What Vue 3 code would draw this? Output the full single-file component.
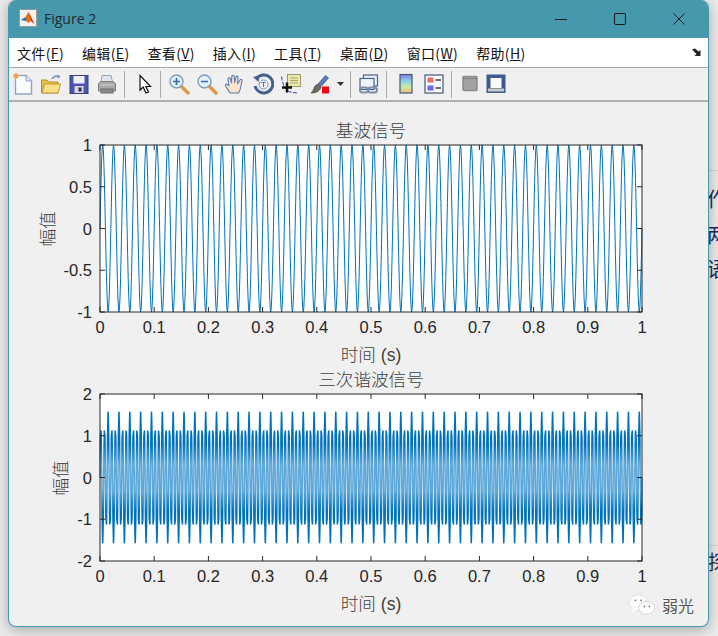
<script setup>
const W = 542
const H = 167

function line(fn, ymin, ymax, n) {
  const pts = []
  for (let i = 0; i <= n; i++) {
    const t = i / n
    const x = t * W
    const y = H - ((fn(t) - ymin) / (ymax - ymin)) * H
    pts.push(x.toFixed(2) + ',' + y.toFixed(2))
  }
  return pts.join(' ')
}
const sinePts = line(t => Math.sin(2 * Math.PI * 50 * t), -1, 1, 1000)
const harmPts = line(
  t => 1.32 * Math.sin(2 * Math.PI * 150 * t) - 0.24 * Math.sin(2 * Math.PI * 50 * t),
  -2, 2, 1000
)
const xTicks = [0, 0.1, 0.2, 0.3, 0.4, 0.5, 0.6, 0.7, 0.8, 0.9, 1].map(v => ({
  x: v * W,
  label: String(v)
}))
const yTicks1 = [1, 0.5, 0, -0.5, -1].map((v, i) => ({ y: (i * H) / 4, label: String(v) }))
const yTicks2 = [2, 1, 0, -1, -2].map((v, i) => ({ y: (i * H) / 4, label: String(v) }))

const menus = [
  ['文件', 'F'], ['编辑', 'E'], ['查看', 'V'], ['插入', 'I'],
  ['工具', 'T'], ['桌面', 'D'], ['窗口', 'W'], ['帮助', 'H']
]
</script>

<template>
  <div class="page">
    <div class="behind">
      <span class="frag f1">作</span>
      <span class="frag f2">两</span>
      <span class="frag f3">语</span>
      <span class="frag f4">探</span>
      <i class="rule r1"></i>
      <i class="rule r2"></i>
    </div>

    <div class="window">
      <header class="titlebar">
        <svg class="appicon" width="18" height="18" viewBox="0 0 18 18">
          <rect x="0.5" y="0.5" width="17" height="17" fill="#f2f2f2" stroke="#9a9a9a" />
          <path d="M2 11 L6 8.5 L9.5 3 L15.5 15 L12 12 L9 14 L6.5 11 Z" fill="#e8701a" />
          <path d="M2 11 L6 8.5 L8 10.5 L6.5 12 Z" fill="#2f6fb0" />
          <path d="M9.5 3 L12 12 L15.5 15 Z" fill="#c8401a" />
        </svg>
        <span class="wintitle">Figure 2</span>
        <div class="winbtns">
          <svg width="14" height="14" viewBox="0 0 14 14"><path d="M1 7.5H13" stroke="#1a1a1a" stroke-width="1" fill="none" /></svg>
          <svg width="14" height="14" viewBox="0 0 14 14"><rect x="1.5" y="1.5" width="11" height="11" rx="1.5" stroke="#1a1a1a" stroke-width="1.1" fill="none" /></svg>
          <svg width="14" height="14" viewBox="0 0 14 14"><path d="M1.5 1.5L12.5 12.5M12.5 1.5L1.5 12.5" stroke="#1a1a1a" stroke-width="1" fill="none" /></svg>
        </div>
      </header>

      <nav class="menubar">
        <span v-for="m in menus" :key="m[1]" class="menu">{{ m[0] }}(<u>{{ m[1] }}</u>)</span>
        <svg class="dock" width="11" height="9" viewBox="0 0 11 9">
          <path d="M0 1.5L3 0.5L6.5 3.5L8.5 2L8.5 8L2.5 8L4.5 6L0 1.5Z" fill="#222" />
        </svg>
      </nav>

      <div class="toolbar">
        <span class="btn">
          <svg width="22" height="24" viewBox="0 0 22 24">
            <path d="M3.5 3.5H14L19.5 9V22H3.5Z" fill="#fbfdff" stroke="#8ea6c6" stroke-width="1.4" />
            <path d="M14 3.5V9H19.5" fill="#dbe7f5" stroke="#8ea6c6" />
            <circle cx="4" cy="4" r="2.6" fill="#ee9a55" stroke="#f5c9a2" />
          </svg>
        </span>
        <span class="btn">
          <svg width="22" height="24" viewBox="0 0 22 24">
            <path d="M1.5 8H7L9 10H18V21H1.5Z" fill="#e8bd4e" stroke="#b58d2a" />
            <path d="M2 21L4.5 12H20.5L18 21Z" fill="#fae08a" stroke="#c29a35" />
            <path d="M12 7C13 4.5 16 3.5 19 4.5" fill="none" stroke="#6f8fb5" stroke-width="1.5" />
            <path d="M18 2.5L20.5 5L17.5 6.5Z" fill="#6f8fb5" />
          </svg>
        </span>
        <span class="btn">
          <svg width="20" height="24" viewBox="0 0 20 24">
            <rect x="1" y="3.5" width="18" height="18" fill="#4a55b5" stroke="#39417f" />
            <rect x="4.5" y="4" width="11" height="7.5" fill="#eef0fa" />
            <rect x="5.5" y="14" width="9" height="7" fill="#d9d9d9" />
            <rect x="9.5" y="15.5" width="3" height="4" fill="#2c2c50" />
          </svg>
        </span>
        <span class="btn">
          <svg width="20" height="24" viewBox="0 0 20 24">
            <path d="M5 3.5H14L15.5 10H4Z" fill="#dfe6ee" stroke="#9aa5b0" />
            <path d="M1.5 11.5L4 9.5H16L18.5 11.5V19H1.5Z" fill="#a9a9a9" stroke="#7d7d7d" />
            <rect x="4" y="17" width="12" height="4" fill="#8a8a8a" stroke="#6e6e6e" />
            <path d="M3 13H17" stroke="#d0d0d0" />
          </svg>
        </span>
        <i class="sep s1"></i>
        <span class="btn">
          <svg width="14" height="24" viewBox="0 0 14 24">
            <path d="M2 3.5V18L5.2 15L8 21L10.5 20L7.8 14.5H12.5Z" fill="#fff" stroke="#111" stroke-width="1.2" />
          </svg>
        </span>
        <i class="sep s2"></i>
        <span class="btn">
          <svg width="22" height="24" viewBox="0 0 22 24">
            <path d="M13 14L20 21" stroke="#d99a45" stroke-width="3.4" stroke-linecap="round" />
            <circle cx="8.5" cy="9.5" r="6.5" fill="#dff0fb" stroke="#7f9dbb" stroke-width="1.4" />
            <path d="M5 9.5H12M8.5 6V13" stroke="#3a6fae" stroke-width="1.7" />
          </svg>
        </span>
        <span class="btn">
          <svg width="22" height="24" viewBox="0 0 22 24">
            <path d="M13 14L20 21" stroke="#d99a45" stroke-width="3.4" stroke-linecap="round" />
            <circle cx="8.5" cy="9.5" r="6.5" fill="#dff0fb" stroke="#7f9dbb" stroke-width="1.4" />
            <path d="M5 9.5H12" stroke="#3a6fae" stroke-width="1.7" />
          </svg>
        </span>
        <span class="btn">
          <svg width="22" height="24" viewBox="0 0 22 24">
            <path d="M6 21C4 18 1.5 14.5 1.5 13C2 11.5 3.5 12 5 14L4 7C4 5.5 6 5.5 6.5 7L7.5 11L7.8 4.5C8 3 10 3 10.2 4.5L10.7 11L12 5C12.5 3.5 14.3 4 14 5.5L13.5 12L16 8C17 6.8 18.5 7.6 18 9L16.5 16C16 19 15 20 14.5 21Z" fill="#fbe3cf" stroke="#5b7fae" stroke-width="1.1" />
          </svg>
        </span>
        <span class="btn">
          <svg width="22" height="24" viewBox="0 0 22 24">
            <path d="M4.2 7A9 9 0 1 1 3 14" fill="none" stroke="#44608f" stroke-width="3" />
            <path d="M1 5L7.5 3.5L6.5 10Z" fill="#44608f" />
            <circle cx="11.5" cy="12.5" r="4.5" fill="#eef2f8" stroke="#7d93b5" />
            <path d="M9.5 10.5H13.5M11.5 10.5V15" stroke="#5c749c" />
          </svg>
        </span>
        <span class="btn">
          <svg width="22" height="24" viewBox="0 0 22 24">
            <rect x="7.5" y="2.5" width="13" height="12" fill="#ece9ae" stroke="#9a9a63" />
            <path d="M10 6H18M10 8.5H18M10 11H18" stroke="#a8a56a" />
            <path d="M1.5 4.5C2 10 4 16 8 19C11 20.5 14 21 18 21" fill="none" stroke="#3b3fd0" stroke-width="1" stroke-dasharray="4 1.4" />
            <path d="M7 10.5V20.5M2 15.5H12" stroke="#111" stroke-width="2.4" />
          </svg>
        </span>
        <span class="btn narrow">
          <svg width="22" height="24" viewBox="0 0 22 24">
            <path d="M9 12L16.5 3.5L19.5 6L12 14.5Z" fill="#5b7dc0" stroke="#3d5a92" stroke-width="0.8" />
            <path d="M9 12.5L12 15C11 18.5 8 21 2 21C4 19.5 4.5 17 5.5 15C6.5 13 8 12.5 9 12.5Z" fill="#6e6a60" stroke="#4c4a44" stroke-width="0.8" />
            <rect x="13" y="14.5" width="7" height="7" fill="#ee0a14" />
          </svg>
        </span>
        <svg class="caret" width="7" height="4" viewBox="0 0 7 4"><path d="M0 0H7L3.5 4Z" fill="#333" /></svg>
        <i class="sep s3"></i>
        <span class="btn">
          <svg width="22" height="24" viewBox="0 0 22 24">
            <rect x="5.5" y="3" width="14" height="11" fill="#e8eef6" stroke="#4a6490" stroke-width="1.2" />
            <rect x="2" y="6.5" width="14" height="11" fill="#eff3f8" stroke="#4a6490" stroke-width="1.2" />
            <rect x="2" y="15.5" width="8" height="5" rx="2.5" fill="none" stroke="#7d8fa8" stroke-width="2" />
            <rect x="10" y="15.5" width="9" height="5" rx="2.5" fill="none" stroke="#7d8fa8" stroke-width="2" />
          </svg>
        </span>
        <i class="sep s4"></i>
        <span class="btn">
          <svg width="14" height="24" viewBox="0 0 14 24">
            <defs>
              <linearGradient id="cbar" x1="0" y1="0" x2="0" y2="1">
                <stop offset="0" stop-color="#7f7fe0" />
                <stop offset="0.35" stop-color="#8fd0e8" />
                <stop offset="0.65" stop-color="#c8e8a8" />
                <stop offset="1" stop-color="#f0c078" />
              </linearGradient>
            </defs>
            <rect x="1" y="2.5" width="12" height="18.5" fill="url(#cbar)" stroke="#44587e" stroke-width="1.2" />
          </svg>
        </span>
        <span class="btn">
          <svg width="20" height="24" viewBox="0 0 20 24">
            <rect x="1" y="3" width="18" height="18" fill="#f6f7fa" stroke="#44587e" stroke-width="1.2" />
            <rect x="3.5" y="5.5" width="6" height="5" fill="#ec6a6a" />
            <rect x="3.5" y="13.5" width="6" height="5" fill="#6a6aec" />
            <path d="M11.5 8H17M11.5 16H17" stroke="#444" stroke-width="1.6" />
          </svg>
        </span>
        <i class="sep s5"></i>
        <span class="btn">
          <svg width="16" height="24" viewBox="0 0 16 24">
            <rect x="1" y="4.5" width="14" height="14" rx="1" fill="#a2a2a2" stroke="#8a8a8a" stroke-width="1.5" />
            <path d="M1 6.5H15" stroke="#808080" />
          </svg>
        </span>
        <span class="btn tight">
          <svg width="20" height="24" viewBox="0 0 20 24">
            <rect x="1" y="3" width="18" height="17.5" fill="#3f5a8e" stroke="#3f5a8e" />
            <rect x="4.5" y="6" width="11" height="10" fill="#fbfbfb" />
            <rect x="2" y="16.5" width="16" height="3" fill="#c8c8c8" />
          </svg>
        </span>
      </div>

      <main class="figure">
        <section class="axes">
          <svg class="chart" width="700" height="226" viewBox="-91 -13 700 226">
            <text class="title" :x="W / 2" y="-8">基波信号</text>
            <rect :width="W" :height="H" fill="#fff" />
            <polyline class="signal" :points="sinePts" />
            <g class="ticks">
              <path v-for="t in xTicks" :key="t.label" :d="`M${t.x} 0v5M${t.x} ${H}v-5`" />
              <path v-for="t in yTicks1" :key="t.label" :d="`M0 ${t.y}h5M${W} ${t.y}h-5`" />
            </g>
            <rect class="frame" x="0" y="0" :width="W" :height="H" />
            <text v-for="t in xTicks" :key="t.label" class="tick" :x="t.x" :y="H + 21">{{ t.label }}</text>
            <text v-for="t in yTicks1" :key="t.label" class="tick end" x="-8" :y="t.y + 6">{{ t.label }}</text>
            <text class="label" :x="W / 2" :y="H + 49">时间 (s)</text>
            <text class="label" transform="translate(-46 84) rotate(-90)">幅值</text>
          </svg>
        </section>
        <section class="axes">
          <svg class="chart" width="700" height="226" viewBox="-91 -13 700 226">
            <defs>
              <linearGradient id="fade" gradientUnits="userSpaceOnUse" x1="0" y1="0" x2="0" :y2="H">
                <stop offset="0.3" stop-color="#0072bd" />
                <stop offset="0.42" stop-color="#5fa9da" />
                <stop offset="0.58" stop-color="#5fa9da" />
                <stop offset="0.7" stop-color="#0072bd" />
              </linearGradient>
            </defs>
            <text class="title" :x="W / 2" y="-8">三次谐波信号</text>
            <rect :width="W" :height="H" fill="#fff" />
            <polyline class="signal thick" :points="harmPts" stroke="url(#fade)" />
            <g class="ticks">
              <path v-for="t in xTicks" :key="t.label" :d="`M${t.x} 0v5M${t.x} ${H}v-5`" />
              <path v-for="t in yTicks2" :key="t.label" :d="`M0 ${t.y}h5M${W} ${t.y}h-5`" />
            </g>
            <rect class="frame" x="0" y="0" :width="W" :height="H" />
            <text v-for="t in xTicks" :key="t.label" class="tick" :x="t.x" :y="H + 21">{{ t.label }}</text>
            <text v-for="t in yTicks2" :key="t.label" class="tick end" x="-8" :y="t.y + 6">{{ t.label }}</text>
            <text class="label" :x="W / 2" :y="H + 49">时间 (s)</text>
            <text class="label" transform="translate(-33 84) rotate(-90)">幅值</text>
          </svg>
        </section>
      </main>
    </div>

    <div class="watermark">
      <svg width="28" height="24" viewBox="0 0 30 24">
        <ellipse cx="11" cy="9.5" rx="10" ry="8.5" fill="#fbfbfb" stroke="#cfcfcf" stroke-width="0.6" />
        <path d="M5 15L4 20L10 17Z" fill="#fbfbfb" />
        <ellipse cx="20" cy="15" rx="8.5" ry="7" fill="#fdfdfd" stroke="#bdbdbd" stroke-width="0.6" />
        <circle cx="8" cy="7" r="1" fill="#777" /><circle cx="14" cy="7" r="1" fill="#777" />
        <circle cx="17.5" cy="13.5" r="0.9" fill="#777" /><circle cx="23" cy="13.5" r="0.9" fill="#777" />
      </svg>
      <span>弱光</span>
    </div>
  </div>
</template>

<style scoped>
.page {
  position: relative;
  width: 718px;
  height: 636px;
  overflow: hidden;
  background: #ececec;
  font-family: "Noto Sans CJK SC", "Noto Sans", sans-serif;
}
.behind {
  position: absolute;
  inset: 0;
}
.frag {
  position: absolute;
  left: 707px;
  font-size: 20px;
  line-height: 22px;
  color: #1c2f5c;
}
.f1 { top: 188px; }
.f2 { top: 224px; }
.f3 { top: 258px; }
.f4 { top: 551px; left: 708px; color: #333; }
.rule {
  position: absolute;
  left: 709px;
  right: 0;
  height: 1px;
  background: #d4d4d4;
}
.r1 { top: 170px; }
.r2 { top: 545px; }
.window {
  position: absolute;
  left: 8px;
  top: 0;
  width: 701px;
  height: 627px;
  box-sizing: border-box;
  display: flex;
  flex-direction: column;
  background: #f0f0f0;
  border: 1px solid #4698ad;
  border-top: 0;
  border-radius: 8px;
  overflow: hidden;
  box-shadow: 0 3px 14px rgba(0, 0, 0, 0.3);
}
.titlebar {
  flex: none;
  height: 38px;
  display: flex;
  align-items: center;
  padding-left: 10px;
  background: #4698ad;
}
.appicon {
  margin-top: -2px;
}
.wintitle {
  margin-left: 7px;
  margin-top: -2px;
  font-family: "Open Sans", "Noto Sans", sans-serif;
  font-size: 14px;
  color: #1c2b30;
}
.winbtns {
  margin-left: auto;
  margin-right: 22px;
  margin-top: -1px;
  display: flex;
  gap: 45px;
}
.menubar {
  flex: none;
  height: 29px;
  display: flex;
  align-items: center;
  gap: 18px;
  padding-left: 8px;
  padding-right: 5px;
  background: #fff;
  border-bottom: 1px solid #a8a8a8;
  font-size: 14px;
  letter-spacing: 0.35px;
  color: #111;
}
.menu {
  white-space: nowrap;
}
.dock {
  margin-left: auto;
}
.toolbar {
  flex: none;
  height: 32px;
  display: flex;
  align-items: center;
  border-bottom: 2px solid #b0b0b0;
  background: #f0f0f0;
}
.btn {
  flex: none;
  width: 28px;
  height: 28px;
  display: flex;
  align-items: center;
  justify-content: center;
}
.btn.narrow { width: 30px; }
.btn.tight { margin-left: -2px; }
.caret { flex: none; margin-left: 2px; margin-right: 6px; }
.sep {
  flex: none;
  width: 1px;
  height: 27px;
  background: #a8a8a8;
}
.s1 { margin: 0 6px 0 3px; }
.s2 { margin: 0 4px 0 1px; }
.s3 { margin: 0 4px 0 0; }
.s4 { margin: 0 5px 0 3px; }
.s5 { margin: 0 4px 0 3px; }
.figure {
  flex: 1;
  display: flex;
  flex-direction: column;
  padding-top: 30px;
  gap: 23px;
}
.axes {
  height: 226px;
}
.chart {
  display: block;
  overflow: visible;
  font-family: "Liberation Sans", Arial, sans-serif;
}
.signal {
  fill: none;
  stroke: #0072bd;
  stroke-width: 1;
  stroke-linejoin: round;
}
.signal.thick {
  stroke: url(#fade);
  stroke-width: 1.6;
}
.ticks path {
  fill: none;
  stroke: #262626;
  stroke-width: 1;
}
.frame {
  fill: none;
  stroke: #262626;
  stroke-width: 1;
}
.tick {
  font-size: 16.5px;
  fill: #262626;
  text-anchor: middle;
}
.tick.end { text-anchor: end; }
.title,
.label {
  font-family: "Liberation Sans", "Noto Sans CJK SC", sans-serif;
  font-size: 17.6px;
  font-weight: 300;
  fill: #404040;
  text-anchor: middle;
}
.watermark {
  position: absolute;
  left: 628px;
  top: 593px;
  display: flex;
  align-items: center;
  gap: 6px;
  font-size: 16px;
  color: #555;
  text-shadow: 0 0 2px #fff;
}
</style>
